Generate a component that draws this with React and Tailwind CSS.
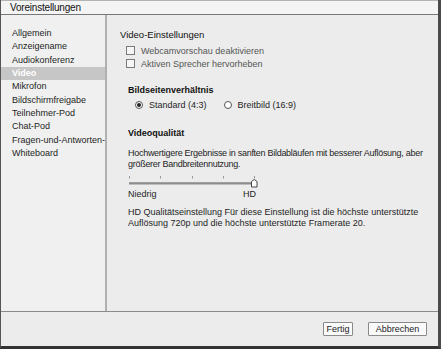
import React from "react";

const NAV = [
  "Allgemein",
  "Anzeigename",
  "Audiokonferenz",
  "Video",
  "Mikrofon",
  "Bildschirmfreigabe",
  "Teilnehmer-Pod",
  "Chat-Pod",
  "Fragen-und-Antworten-Pod",
  "Whiteboard",
];

function Checkbox({ label }) {
  return (
    <div className="flex h-[13px] items-center ml-[6px]">
      <span className="w-[9px] h-[9px] border border-[#7a7a7a] bg-[#f6f6f6]" />
      <span className="ml-[6px] text-[#555]">{label}</span>
    </div>
  );
}

function Radio({ label, checked }) {
  return (
    <div className="flex items-center">
      <span className="w-[8px] h-[8px] rounded-full border border-[#555] bg-white flex items-center justify-center">
        {checked && <span className="w-[4px] h-[4px] rounded-full bg-[#222]" />}
      </span>
      <span className="ml-[6px]">{label}</span>
    </div>
  );
}

function Slider() {
  const ticks = [2, 33, 65, 96, 127];
  return (
    <svg width="132" height="15" className="block ml-[-1px]">
      {ticks.map((x) => (
        <line key={x} x1={x + 0.5} y1="3" x2={x + 0.5} y2="5.5" stroke="#999" strokeWidth="1" />
      ))}
      <rect x="2" y="9.5" width="123" height="1.2" fill="#555" />
      <rect x="2" y="10.7" width="123" height="1" fill="#aaa" />
      <polygon points="124.5,14 124.5,8.5 127.2,6.5 130,8.5 130,14" fill="#fff" stroke="#333" strokeWidth="0.9" />
    </svg>
  );
}

export default function App() {
  return (
    <div className="w-[441px] h-[349px] flex flex-col bg-[#ececec] border-l border-l-[#555] border-r-[3px] border-r-[#4a4a4a] border-b-[3px] border-b-[#333] font-['Liberation_Sans',Arial,sans-serif] text-[9px] text-[#1e1e1e]">
      {/* title bar */}
      <div className="h-[15px] bg-[#f4f4f4] border-t border-t-[#b4b4b4] border-b border-b-[#777] pl-[9px] text-[10px] leading-[13px] tracking-[-0.2px] text-[#111]">
        Voreinstellungen
      </div>

      <div className="flex flex-1 min-h-0">
        {/* sidebar */}
        <div className="w-[106px] shrink-0 bg-[#f0f0f0] border-r-2 border-r-[#b0b0b0] pt-[12px] overflow-hidden">
          {NAV.map((item) => (
            <div
              key={item}
              className={
                item === "Video"
                  ? "h-[13.33px] leading-[13.33px] pl-[11px] bg-[#c6c6c6] text-white font-bold whitespace-nowrap"
                  : "h-[13.33px] leading-[13.33px] pl-[11px] whitespace-nowrap"
              }
            >
              {item}
            </div>
          ))}
        </div>

        {/* content */}
        <div className="flex-1 pl-[13px] pt-[13px] leading-[12px]">
          <div className="text-[9.5px] leading-[13px] text-[#111]">Video-Einstellungen</div>
          <div className="mt-[3px]">
            <Checkbox label="Webcamvorschau deaktivieren" />
            <Checkbox label="Aktiven Sprecher hervorheben" />
          </div>

          <div className="ml-[8px]">
            <div className="mt-[14px] font-bold text-[#111]">Bildseitenverhältnis</div>
            <div className="mt-[3px] ml-[7px] flex gap-[17px]">
              <Radio label="Standard (4:3)" checked />
              <Radio label="Breitbild (16:9)" />
            </div>

            <div className="mt-[16px] font-bold text-[#111]">Videoqualität</div>
            <p className="mt-[9px] leading-[11px] whitespace-nowrap tracking-[-0.28px]">
              Hochwertigere Ergebnisse in sanften Bildabläufen mit besserer Auflösung, aber
              <br />
              größerer Bandbreitennutzung.
            </p>
            <div className="mt-[3px]">
              <Slider />
            </div>
            <div className="flex justify-between w-[128px]">
              <span>Niedrig</span>
              <span>HD</span>
            </div>
            <p className="mt-[7px] leading-[11px] whitespace-nowrap">
              HD Qualitätseinstellung Für diese Einstellung ist die höchste unterstützte
              <br />
              Auflösung 720p und die höchste unterstützte Framerate 20.
            </p>
          </div>
        </div>
      </div>

      {/* footer */}
      <div className="h-[35px] shrink-0 border-t border-t-[#8a8a8a] flex justify-end items-start pt-[10px] pr-[11px] gap-[15px]">
        <button className="w-[30px] h-[14px] bg-[#fafafa] border border-[#8a8a8a] rounded-[1px] text-[9px] leading-[12px] text-[#222]">
          Fertig
        </button>
        <button className="w-[59px] h-[14px] bg-[#fafafa] border border-[#8a8a8a] rounded-[1px] text-[9px] leading-[12px] text-[#222]">
          Abbrechen
        </button>
      </div>
    </div>
  );
}
